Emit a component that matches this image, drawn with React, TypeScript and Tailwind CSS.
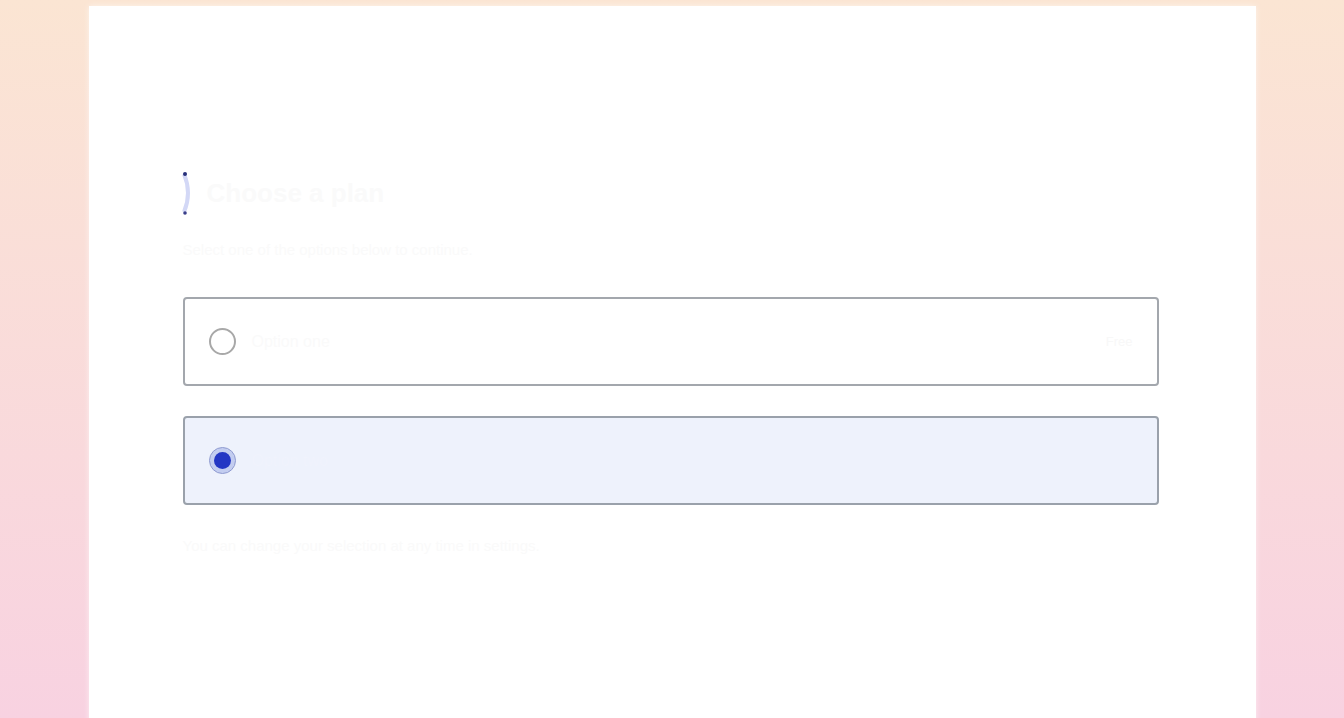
import { useState } from "react";

const options = [
  { id: "a", label: "Option one", note: "Free" },
  { id: "b", label: "Option two", note: "" },
];

const App = () => {
  const [selected, setSelected] = useState("b");

  return (
    <div
      className="w-[1344px] h-[718px] overflow-hidden bg-gradient-to-b from-[#fbe5d3] to-[#f8d2e1] flex justify-center pt-[6px]"
      style={{ fontFamily: '"Liberation Sans", Arial, sans-serif' }}
    >
      <div className="w-[1167px] h-[760px] bg-white shadow-[0_0_6px_rgba(255,255,255,0.6)] pl-[94px] pr-[97px] pt-[159px]">
        <div className="flex items-center gap-3 h-[56px]">
          <svg width="14" height="50" viewBox="0 0 14 50" className="-ml-[2px]">
            <path d="M3 6 Q11 25 3 44" stroke="#d3d8f6" strokeWidth="4" fill="none" />
            <circle cx="4" cy="6" r="2" fill="#27307a" />
            <circle cx="4" cy="45" r="1.8" fill="#3a3f8a" />
          </svg>
          <h1 className="text-[26px] font-bold text-[#fafafa]">Choose a plan</h1>
        </div>
        <p className="mt-[18px] text-[15px] leading-[22px] text-[#fafafa] w-[300px]">
          Select one of the options below to continue.
        </p>

        <div className="mt-[36px] flex flex-col gap-[30px]">
          {options.map((o) => {
            const active = selected === o.id;
            return (
              <button
                key={o.id}
                onClick={() => setSelected(o.id)}
                className={`h-[89px] w-full flex items-center px-[24px] rounded-[4px] border-2 text-left ${
                  active ? "bg-[#eef2fc] border-[#9aa1ab]" : "bg-white border-[#a3a7ad]"
                }`}
              >
                {active ? (
                  <span className="w-[27px] h-[27px] rounded-full bg-[#c3cdf0] border border-[#8f9bd0] flex items-center justify-center">
                    <span className="w-[17px] h-[17px] rounded-full bg-[#2336c4]" />
                  </span>
                ) : (
                  <span className="w-[27px] h-[27px] rounded-full border-2 border-[#a8a8a8] bg-white" />
                )}
                <span className={`ml-4 text-[16px] flex-1 ${active ? "text-[#f0f3fc]" : "text-[#fafafa]"}`}>
                  {o.label}
                </span>
                {o.note && <span className="text-[13px] text-[#f8f8f8]">{o.note}</span>}
              </button>
            );
          })}
        </div>

        <p className="mt-[30px] text-[15px] text-[#fafafa]">
          You can change your selection at any time in settings.
        </p>
      </div>
    </div>
  );
};

export default App;
